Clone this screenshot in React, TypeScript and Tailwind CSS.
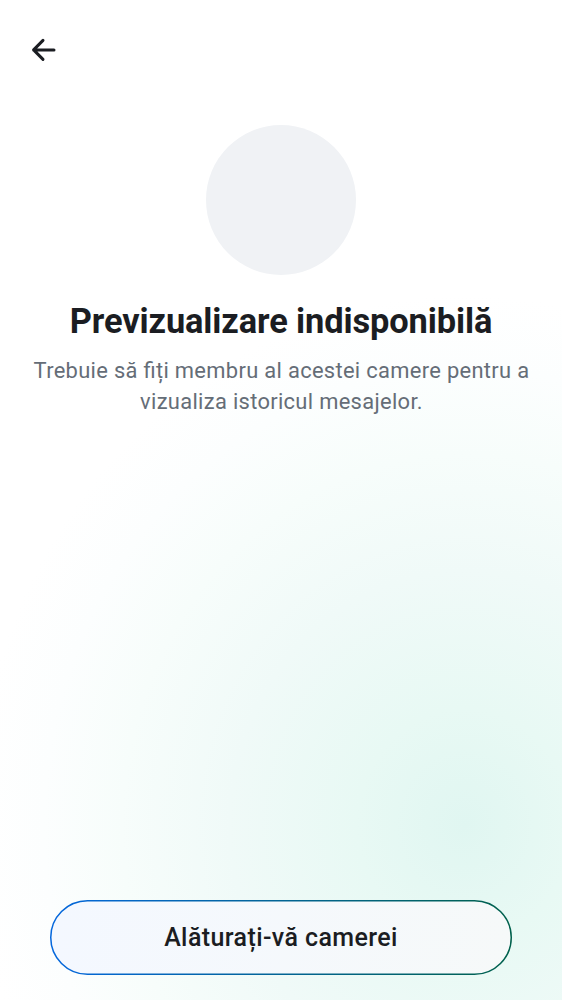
export default function App() {
  return (
    <main className="flex h-[1000px] w-[562px] flex-col overflow-hidden bg-white bg-[radial-gradient(ellipse_490px_530px_at_465px_825px,#e0f6f1_0%,#e8f9f4_22%,#f0faf8_48%,#f7fdfb_70%,#fcfefe_86%,#ffffff_100%)] font-['Roboto',sans-serif] text-[#1b1d22]">
      <header className="flex h-[125px] shrink-0 items-start pt-[36px] pl-[30px]">
        <button aria-label="Înapoi">
          <svg width="28" height="28" viewBox="0 0 28 28" fill="none" stroke="currentColor" strokeWidth="3" strokeLinecap="round" strokeLinejoin="round">
            <path d="M24 13.9H3.6M13 4.4L3.6 13.9L13 23.4" />
          </svg>
        </button>
      </header>
      <section className="flex flex-1 flex-col items-center text-center">
        <div className="size-[150px] shrink-0 rounded-full bg-[#f0f2f5]" />
        <h1 className="mt-[25px] text-[34.4px] leading-[42px] font-bold tracking-[-0.11px] whitespace-nowrap">Previzualizare indisponibilă</h1>
        <p className="mt-[13px] pl-px text-[21.9px] leading-[31px] tracking-[0.32px] whitespace-nowrap text-[#656d77] [font-feature-settings:'liga'_1]">
          Trebuie să fiți membru al acestei camere pentru a<br />vizualiza istoricul mesajelor.
        </p>
      </section>
      <footer className="px-[50px] pb-[25px]">
        <button className="relative flex h-[75px] w-full items-center justify-center rounded-full bg-linear-to-r from-[#f4f8ff] to-[#f6f9f9] text-[25px] font-medium tracking-[0.4px]">
          <svg className="absolute inset-0" width="462" height="75" viewBox="0 0 462 75" fill="none" aria-hidden="true">
            <defs>
              <linearGradient id="outline" x1="0" y1="0" x2="462" y2="0" gradientUnits="userSpaceOnUse">
                <stop stopColor="#0467dd" />
                <stop offset="1" stopColor="#00614c" />
              </linearGradient>
            </defs>
            <rect x="0.75" y="0.75" width="460.5" height="73.5" rx="36.75" stroke="url(#outline)" strokeWidth="1.5" />
          </svg>
          Alăturați-vă camerei
        </button>
      </footer>
    </main>
  );
}
